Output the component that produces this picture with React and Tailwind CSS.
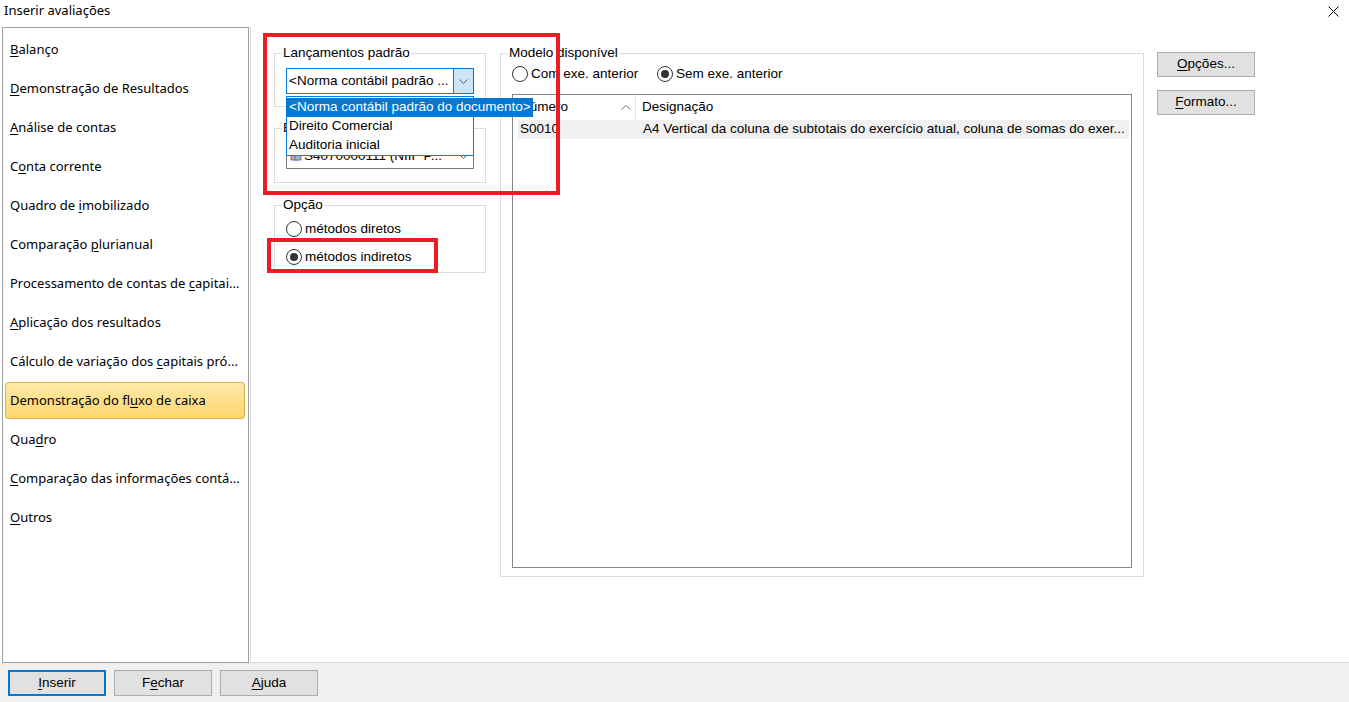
import React from "react"

const UI = { fontFamily: '"Noto Sans", "Open Sans", sans-serif' }
const SANS = { fontFamily: '"Liberation Sans", Arial, sans-serif' }

const items = [
  { t: "Balanço", u: 0 },
  { t: "Demonstração de Resultados", u: 0 },
  { t: "Análise de contas", u: 0 },
  { t: "Conta corrente", u: 1 },
  { t: "Quadro de imobilizado", u: 10 },
  { t: "Comparação plurianual", u: 11 },
  { t: "Processamento de contas de capitai...", u: 27 },
  { t: "Aplicação dos resultados", u: 0 },
  { t: "Cálculo de variação dos capitais pró...", u: 24 },
  { t: "Demonstração do fluxo de caixa", u: 18, active: true },
  { t: "Quadro", u: 3 },
  { t: "Comparação das informações contá...", u: 0 },
  { t: "Outros", u: 0 },
]

// wrapped in a span so the spaces next to the underlined letter survive inside flex parents
const Mnemonic = ({ t, u }) => (
  <span className="whitespace-pre">
    {t.slice(0, u)}
    <span className="underline underline-offset-2">{t[u]}</span>
    {t.slice(u + 1)}
  </span>
)

const Chevron = () => (
  <svg width="9" height="5" viewBox="0 0 9 5" className="block">
    <path d="M0.5 0.5 L4.5 4.5 L8.5 0.5" fill="none" stroke="#606060" strokeWidth="1" />
  </svg>
)

const Radio = ({ checked, label }) => (
  <div className="flex items-center h-[16px]">
    <div className="w-[16px] h-[16px] rounded-full border border-[#333333] bg-white flex items-center justify-center">
      {checked && <div className="w-[8px] h-[8px] rounded-full bg-[#333333]" />}
    </div>
    <span className="ml-[3px] text-[13.5px] text-black leading-none">{label}</span>
  </div>
)

const Group = ({ title, className = "", children }) => (
  <div className={`relative border border-[#dcdcdc] ${className}`}>
    <span className="absolute left-[7px] -top-[9px] bg-white px-[1px] text-[13.5px] leading-[16px] text-black">
      {title}
    </span>
    {children}
  </div>
)

const WinButton = ({ t, u, focused, className = "" }) => (
  <button
    className={`w-[98px] h-[25px] bg-[#e1e1e1] text-[13.5px] text-black ${
      focused ? "border-2 border-[#0078d7]" : "border border-[#adadad]"
    } ${className}`}
    style={SANS}
  >
    <Mnemonic t={t} u={u} />
  </button>
)

export default function App() {
  return (
    <div className="w-[1349px] h-[702px] bg-white flex flex-col overflow-hidden" style={UI}>
      {/* Title bar */}
      <div className="h-[27px] flex items-center justify-between pl-[4px] pr-[10px]">
        <span className="text-[13px] text-black -mt-[5px]">Inserir avaliações</span>
        <svg width="11" height="11" viewBox="0 0 11 11" className="-mt-[5px]">
          <path d="M0.5 0.5 L10.5 10.5 M10.5 0.5 L0.5 10.5" stroke="#000" strokeWidth="1" />
        </svg>
      </div>

      {/* Middle */}
      <div className="h-[636px] flex">
        <div className="ml-[2px] w-[247px] h-full border border-[#a0a0a0] pt-[2px]">
          {items.map((it) => (
            <div key={it.t} className="h-[39px] pl-[2px] pr-[3px] flex items-center">
              <div
                className={`w-full h-[37px] flex items-center pl-[4px] rounded-[3px] text-[13px] text-black whitespace-nowrap ${
                  it.active
                    ? "bg-linear-to-b from-[#fee9a6] to-[#fdd76c] border border-[#dcb24e]"
                    : "border border-transparent"
                }`}
              >
                <Mnemonic t={it.t} u={it.u} />
              </div>
            </div>
          ))}
        </div>

        <div className="relative flex-1 ml-[1px] border-l border-b border-[#dadada] pt-[26px] pl-[23px] flex items-start" style={SANS}>
          {/* Column 1 */}
          <div className="w-[212px] flex flex-col">
            <Group title="Lançamentos padrão" className="h-[54px] pt-[14px] px-[11px] z-10">
              <div className="relative w-[188px] h-[26px] border border-[#0078d7] flex items-center bg-white">
                <span className="flex-1 pl-[2px] text-[13.5px] text-black whitespace-nowrap overflow-hidden">
                  &lt;Norma contábil padrão ...
                </span>
                <div className="w-[20px] h-full bg-[#cce4f7] border-l border-[#0078d7] flex items-center justify-center">
                  <Chevron />
                </div>
                {/* open dropdown list */}
                <div className="absolute left-[-1px] top-[27px] w-[188px] h-[60px] border border-[#0078d7] bg-white pt-[1px] text-[13.5px] text-black">
                  <div className="h-[19px] flex items-center whitespace-nowrap">
                    <span className="bg-[#0078d7] text-white h-[19px] flex items-center pl-[2px] pr-[2px]">
                      &lt;Norma contábil padrão do documento&gt;
                    </span>
                  </div>
                  <div className="h-[19px] flex items-center pl-[2px]">Direito Comercial</div>
                  <div className="h-[19px] flex items-center pl-[2px]">Auditoria inicial</div>
                </div>
              </div>
            </Group>

            <Group title="Balanço de abertura" className="mt-[21px] h-[55px] pt-[14px] px-[11px]">
              <div className="w-[188px] h-[26px] border border-[#7a7a7a] flex items-center bg-white">
                <svg width="12" height="12" viewBox="0 0 12 12" className="ml-[3px]">
                  <rect x="1" y="2" width="7" height="8" fill="#b9a3d8" stroke="#6b4fa0" strokeWidth="0.8" />
                  <rect x="5" y="4" width="6" height="6" fill="#8fb7e8" stroke="#3a6db0" strokeWidth="0.8" />
                </svg>
                <span className="flex-1 pl-[2px] text-[13.5px] text-black whitespace-nowrap overflow-hidden">
                  S4070000111 (NIIF P...
                </span>
                <div className="w-[20px] h-full flex items-center justify-center">
                  <Chevron />
                </div>
              </div>
            </Group>

            <Group title="Opção" className="mt-[22px] h-[68px] pt-[15px] px-[11px]">
              <Radio label="métodos diretos" />
              <div className="mt-[12px]">
                <Radio checked label="métodos indiretos" />
              </div>
            </Group>
          </div>

          {/* Column 2 */}
          <Group title="Modelo disponível" className="ml-[14px] w-[644px] h-[524px] pt-[12px] pl-[11px]">
            <div className="flex">
              <div className="w-[145px]">
                <Radio label="Com exe. anterior" />
              </div>
              <Radio checked label="Sem exe. anterior" />
            </div>
            <div className="mt-[12px] w-[620px] h-[474px] border border-[#828790] bg-white text-[13.5px] text-black">
              <div className="h-[25px] flex">
                <div className="w-[123px] flex items-center justify-between pl-[7px] pr-[4px] border-r border-[#e5e5e5]">
                  <span>Número</span>
                  <svg width="10" height="5" viewBox="0 0 10 5">
                    <path d="M0.5 4.5 L5 0.5 L9.5 4.5" fill="none" stroke="#7a7a7a" strokeWidth="1" />
                  </svg>
                </div>
                <div className="flex items-center pl-[6px]">Designação</div>
              </div>
              <div className="ml-[5px] mr-[2px] h-[19px] bg-[#f0f0f0] flex items-center">
                <div className="w-[119px] pl-[2px]">S0010</div>
                <div className="pl-[6px] whitespace-nowrap">
                  A4 Vertical da coluna de subtotais do exercício atual, coluna de somas do exer...
                </div>
              </div>
            </div>
          </Group>

          {/* Buttons */}
          <div className="ml-[13px] -mt-[1px] flex flex-col">
            <WinButton t="Opções..." u={0} />
            <WinButton t="Formato..." u={0} className="mt-[13px]" />
          </div>

          {/* Annotation frames */}
          <div className="absolute left-[12px] top-[6px] w-[297px] h-[162px] border-4 border-[#ed1c24] z-20 pointer-events-none" />
          <div className="absolute left-[16px] top-[211px] w-[171px] h-[35px] border-4 border-[#ed1c24] z-20 pointer-events-none" />
        </div>
      </div>

      {/* Bottom bar */}
      <div className="flex-1 bg-[#f0f0f0] flex items-start pt-[7px] pl-[8px] gap-[8px]">
        <WinButton t="Inserir" u={0} focused className="h-[26px]" />
        <WinButton t="Fechar" u={1} className="h-[26px]" />
        <WinButton t="Ajuda" u={0} className="h-[26px]" />
      </div>
    </div>
  )
}
